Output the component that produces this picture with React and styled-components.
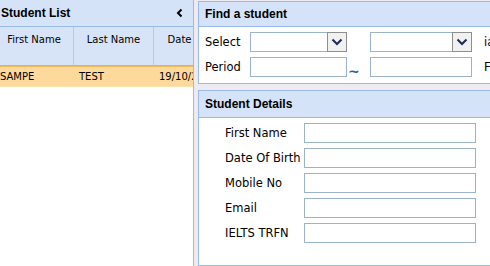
import React from "react";
import styled, { createGlobalStyle } from "styled-components";

const GlobalStyle = createGlobalStyle`
  html, body { margin: 0; padding: 0; background: #eeeaf2; overflow: hidden; }
  body { font-family: "DejaVu Sans", Verdana, sans-serif; color: #000; }
`;

const Page = styled.div`
  display: flex;
  width: 540px;
  height: 266px;
  overflow: hidden;
`;

const LeftPanel = styled.div`
  box-sizing: border-box;
  width: 199px;
  margin-left: -5px;
  flex: none;
  background: #fff;
  border-right: 1px solid #99bbe8;
  overflow: hidden;
  display: flex;
  flex-direction: column;
`;

const Splitter = styled.div`
  width: 4px;
  flex: none;
`;

const RightCol = styled.div`
  flex: 1;
  display: flex;
  flex-direction: column;
  gap: 6px;
  padding-top: 1px;
`;

const Panel = styled.section`
  border: 1px solid #99bbe8;
  background: #fff;
  display: flex;
  flex-direction: column;
  flex: ${(p) => (p.$grow ? 1 : "none")};
`;

const PanelHeader = styled.div`
  box-sizing: border-box;
  height: ${(p) => p.$h || 25}px;
  display: flex;
  align-items: center;
  justify-content: space-between;
  padding: 0 8px 0 6px;
  background: #d4e3f7;
  border-bottom: 1px solid #99bbe8;
  font-family: "Liberation Sans", Arial, sans-serif;
  font-weight: bold;
  font-size: 12px;
`;

const Grid = styled.div`
  display: grid;
  grid-template-columns: 79px 80px 92px;
`;

const HeadCell = styled.div`
  box-sizing: border-box;
  height: 39px;
  padding-top: 7px;
  text-align: center;
  font-size: 10px;
  background: #d7e4f7;
  border-right: 1px solid #b9c9e0;
  border-bottom: 1px solid #99bbe8;
  white-space: nowrap;
  overflow: hidden;
`;

const Cell = styled.div`
  box-sizing: border-box;
  height: 21px;
  padding-left: 5px;
  display: flex;
  align-items: center;
  font-size: 10px;
  background: #fdd99b;
  border-top: 1px solid #f2bb5e;
  border-bottom: 1px solid #fbe2b2;
  white-space: nowrap;
  overflow: hidden;
`;

const FindBody = styled.div`
  display: flex;
  flex-direction: column;
  gap: 5px;
  padding: 5px 0 6px 6px;
`;

const Row = styled.div`
  display: flex;
  align-items: center;
  height: 20px;
  font-size: 11.5px;
`;

const Label = styled.span`
  width: ${(p) => p.$w}px;
  flex: none;
  white-space: nowrap;
`;

const TextBox = styled.div`
  box-sizing: border-box;
  width: ${(p) => p.$w}px;
  height: 20px;
  flex: none;
  background: #fff;
  border: 1px solid #9db3c9;
`;

const SelectBox = styled.div`
  box-sizing: border-box;
  width: ${(p) => p.$w}px;
  height: 20px;
  flex: none;
  display: flex;
`;

const SelectField = styled.div`
  flex: 1;
  border: 1px solid #9db3c9;
  border-right: none;
  background: #fff;
`;

const DropButton = styled.div`
  box-sizing: border-box;
  width: 20px;
  height: 20px;
  display: flex;
  align-items: center;
  justify-content: center;
  background: #f1f1f1;
  border: 1px solid #8e8e8e;
`;

const Between = styled.div`
  width: 23px;
  flex: none;
  display: flex;
  justify-content: flex-start;
  padding-left: 1px;
  padding-top: 7px;
  box-sizing: border-box;
  color: #2b5ea5;
  font-weight: bold;
  font-size: 14px;
  line-height: 12px;
`;

const Trailing = styled.span`
  margin-left: 12px;
  white-space: nowrap;
`;

const DetailsBody = styled.div`
  display: flex;
  flex-direction: column;
  gap: 5px;
  padding: 5px 0 0 26px;
`;

const Chevron = ({ dir }) =>
  dir === "left" ? (
    <svg width="10" height="10" viewBox="0 0 10 10">
      <polyline points="6.5,1.5 3,5 6.5,8.5" fill="none" stroke="#000" strokeWidth="2" />
    </svg>
  ) : (
    <svg width="12" height="12" viewBox="0 0 12 12">
      <polyline points="1.5,3.5 6,8 10.5,3.5" fill="none" stroke="#1c2a55" strokeWidth="2" />
    </svg>
  );

const Select = ({ w }) => (
  <SelectBox $w={w}>
    <SelectField />
    <DropButton>
      <Chevron dir="down" />
    </DropButton>
  </SelectBox>
);

const details = ["First Name", "Date Of Birth", "Mobile No", "Email", "IELTS TRFN"];

export default function App() {
  return (
    <>
      <GlobalStyle />
      <Page>
        <LeftPanel>
          <PanelHeader $h={27}>
            <span>Student List</span>
            <Chevron dir="left" />
          </PanelHeader>
          <Grid>
            <HeadCell>First Name</HeadCell>
            <HeadCell>Last Name</HeadCell>
            <HeadCell>Date of Birth</HeadCell>
            <Cell>SAMPE</Cell>
            <Cell>TEST</Cell>
            <Cell>19/10/2023</Cell>
          </Grid>
        </LeftPanel>
        <Splitter />
        <RightCol>
          <Panel>
            <PanelHeader>Find a student</PanelHeader>
            <FindBody>
              <Row>
                <Label $w={45}>Select</Label>
                <Select w={97} />
                <Between />
                <Select w={102} />
                <Trailing>ia</Trailing>
              </Row>
              <Row>
                <Label $w={45}>Period</Label>
                <TextBox $w={97} />
                <Between>~</Between>
                <TextBox $w={102} />
                <Trailing>F</Trailing>
              </Row>
            </FindBody>
          </Panel>
          <Panel $grow>
            <PanelHeader $h={27}>Student Details</PanelHeader>
            <DetailsBody>
              {details.map((d) => (
                <Row key={d}>
                  <Label $w={79}>{d}</Label>
                  <TextBox $w={172} />
                </Row>
              ))}
            </DetailsBody>
          </Panel>
        </RightCol>
      </Page>
    </>
  );
}
